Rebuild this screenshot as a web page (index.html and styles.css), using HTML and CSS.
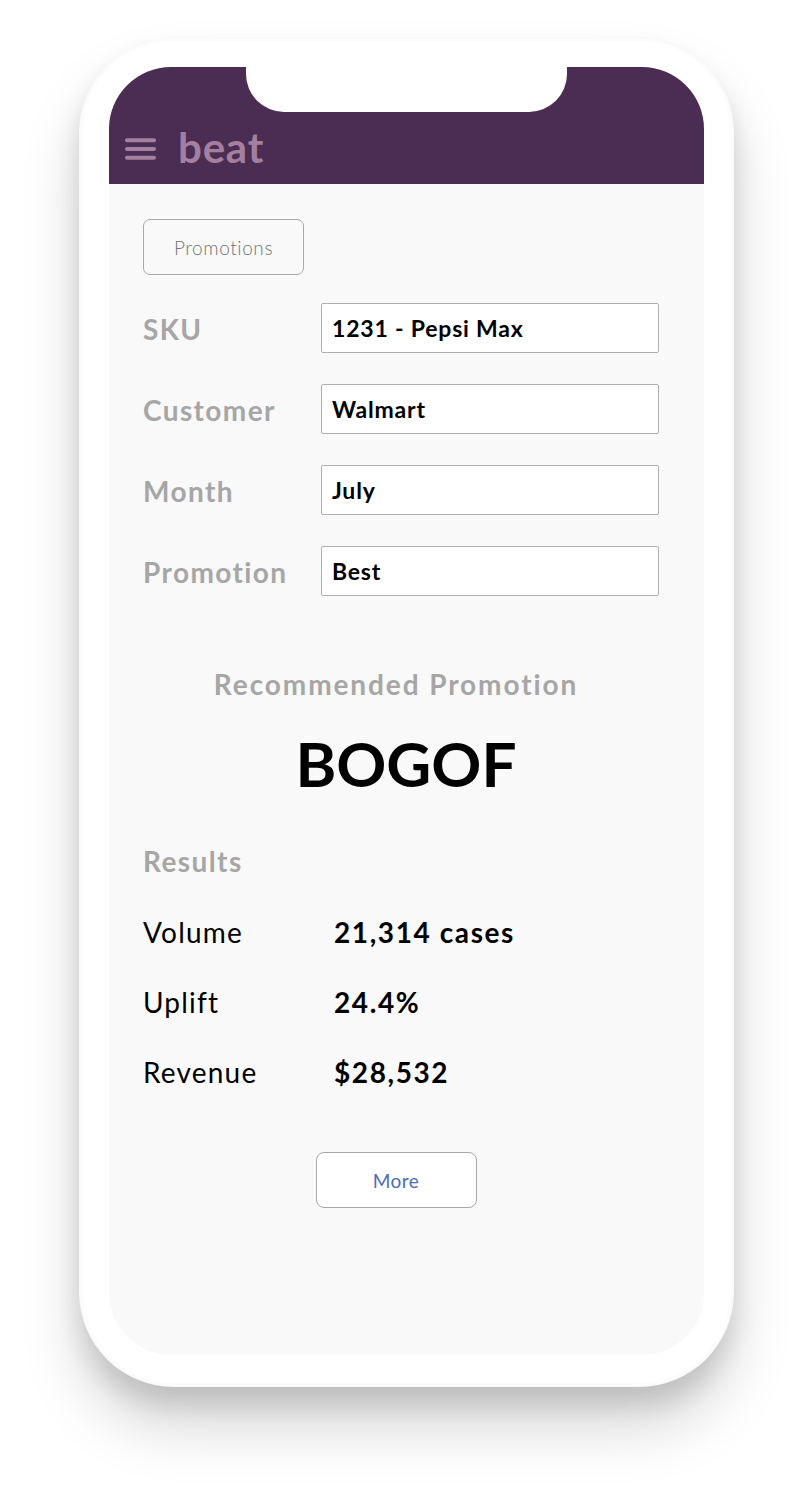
FILE: index.html
```html
<!DOCTYPE html>
<html lang="en">
<head>
    <meta charset="UTF-8">
    <meta name="viewport" content="width=device-width, initial-scale=1.0">
    <title>beat - Promotions</title>
    <link rel="stylesheet" href="styles.css">
</head>
<body>
    <div class="phone">
        <div class="screen">
            <div class="notch"></div>
            <div class="header">
                <svg class="menu-icon" width="32" height="24" viewBox="0 0 32 24">
                    <rect x="0" y="1" width="32" height="4" rx="2"></rect>
                    <rect x="0" y="10" width="32" height="4" rx="2"></rect>
                    <rect x="0" y="19" width="32" height="4" rx="2"></rect>
                </svg>
                <span class="logo">beat</span>
            </div>

            <div class="content">
                <button class="btn-outline">Promotions</button>

                <div class="form">
                    <div class="form-row">
                        <label for="sku">SKU</label>
                        <input type="text" id="sku" value="1231 - Pepsi Max">
                    </div>
                    <div class="form-row">
                        <label for="customer">Customer</label>
                        <input type="text" id="customer" value="Walmart">
                    </div>
                    <div class="form-row">
                        <label for="month">Month</label>
                        <input type="text" id="month" value="July">
                    </div>
                    <div class="form-row">
                        <label for="promotion">Promotion</label>
                        <input type="text" id="promotion" value="Best">
                    </div>
                </div>

                <div class="recommend">
                    <h2>Recommended Promotion</h2>
                    <p class="promo-name">BOGOF</p>
                </div>

                <div class="results">
                    <h3>Results</h3>
                    <div class="result-row">
                        <span class="result-label">Volume</span>
                        <span class="result-value">21,314 cases</span>
                    </div>
                    <div class="result-row">
                        <span class="result-label">Uplift</span>
                        <span class="result-value">24.4%</span>
                    </div>
                    <div class="result-row">
                        <span class="result-label">Revenue</span>
                        <span class="result-value">$28,532</span>
                    </div>
                </div>

                <div class="more">
                    <button class="btn-more">More</button>
                </div>
            </div>
        </div>
    </div>
</body>
</html>
```

FILE: styles.css
```css
body {
    font-family: Lato, "Noto Sans", sans-serif;
    background-color: #FFF;
    margin: 0;
    padding: 37px 0 101px 79px;
}

.phone {
    width: 595px;
    height: 1288px;
    padding: 30px 30px 32px 30px;
    background-color: #FFF;
    border-radius: 95px;
    box-shadow: 0 18px 24px rgba(0, 0, 0, 0.12), 0 40px 60px rgba(0, 0, 0, 0.16), inset 0 0 6px rgba(0, 0, 0, 0.06);
}

.screen {
    position: relative;
    height: 100%;
    background-color: #F9F9F9;
    border-radius: 62px;
    overflow: hidden;
}

.notch {
    position: absolute;
    top: 0;
    left: 137px;
    width: 321px;
    height: 45px;
    background-color: #FFF;
    border-radius: 0 0 38px 38px;
}

.header {
    height: 117px;
    box-sizing: border-box;
    padding: 42px 0 0 16px;
    background-color: #4B2D53;
    display: flex;
    align-items: center;
    gap: 22px;
}

.menu-icon {
    fill: #A57FA0;
    width: 31px;
    height: 24px;
    margin-top: 4px;
}

.logo {
    color: #A57FA0;
    font-size: 42px;
    font-weight: 700;
    letter-spacing: 0.8px;
}

.content {
    padding: 35px 45px 0 34px;
}

.btn-outline {
    width: 161px;
    height: 56px;
    background-color: transparent;
    border: 1px solid #A8A8A8;
    border-radius: 7px;
    font-family: Lato, sans-serif;
    font-size: 19px;
    font-weight: 300;
    letter-spacing: 0.6px;
    color: #737373;
}

.form {
    margin-top: 28px;
    display: flex;
    flex-direction: column;
    gap: 31px;
}

.form-row {
    display: flex;
    align-items: center;
}

label {
    width: 178px;
    color: #A6A6A6;
    font-size: 28px;
    font-weight: 700;
    letter-spacing: 1.4px;
    padding-top: 1px;
}

input {
    width: 338px;
    height: 50px;
    box-sizing: border-box;
    padding: 0 10px;
    border: 1px solid #AFAFAF;
    border-radius: 2px;
    background-color: #FFF;
    font-family: Lato, sans-serif;
    font-size: 23px;
    font-weight: 700;
    letter-spacing: 0.8px;
    color: #000;
}

.recommend {
    margin-top: 71px;
    text-align: center;
    padding-right: 10px;
}

.recommend h2 {
    margin: 0;
    color: #A6A6A6;
    font-size: 28px;
    font-weight: 700;
    letter-spacing: 1.9px;
}

.promo-name {
    margin: 25px 0 0 0;
    padding-left: 20px;
    color: #000;
    font-size: 62px;
    font-weight: 700;
}

.results {
    margin-top: 44px;
}

.results h3 {
    margin: 0 0 19px 0;
    color: #A6A6A6;
    font-size: 28px;
    font-weight: 700;
    letter-spacing: 1.4px;
}

.result-row {
    display: flex;
    height: 70px;
    align-items: center;
    font-size: 28px;
    letter-spacing: 1.2px;
}

.result-label {
    width: 191px;
    color: #000;
}

.result-value {
    color: #000;
    font-weight: 700;
    letter-spacing: 1.6px;
}

.more {
    margin-top: 45px;
    text-align: center;
    padding-right: 10px;
}

.btn-more {
    width: 161px;
    height: 56px;
    background-color: #FFF;
    border: 1px solid #A8A8A8;
    border-radius: 8px;
    font-family: Lato, sans-serif;
    font-size: 19px;
    letter-spacing: 0.4px;
    color: #4A6DB5;
}
```
